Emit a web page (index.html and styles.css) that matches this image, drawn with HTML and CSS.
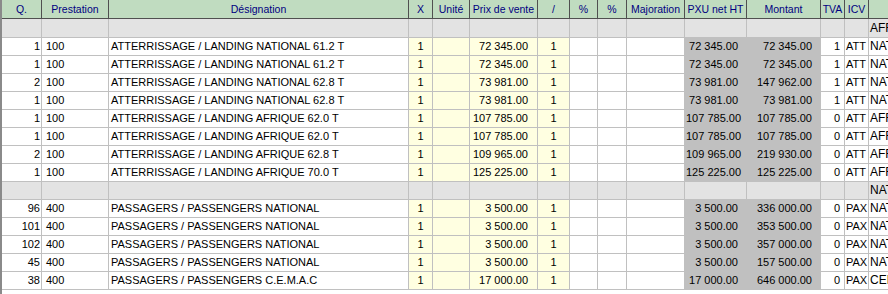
FILE: index.html
```html
<!DOCTYPE html>
<html lang="fr">
<head>
<meta charset="utf-8">
<title>Prestations</title>
<link rel="stylesheet" href="styles.css">
</head>
<body>
<div class="grid">
  <div class="row head">
    <div class="c">Q.</div><div class="c">Prestation</div><div class="c">Désignation</div><div class="c">X</div><div class="c">Unité</div><div class="c">Prix de vente</div><div class="c">/</div><div class="c">%</div><div class="c">%</div><div class="c">Majoration</div><div class="c">PXU net HT</div><div class="c">Montant</div><div class="c">TVA</div><div class="c">ICV</div><div class="c">NA</div>
  </div>
  <div class="row group first">
    <div class="c"></div><div class="c"></div><div class="c"></div><div class="c"></div><div class="c"></div><div class="c"></div><div class="c"></div><div class="c"></div><div class="c"></div><div class="c"></div><div class="c"></div><div class="c"></div><div class="c"></div><div class="c"></div><div class="c na">AFRIQUE</div>
  </div>
  <div class="row data">
    <div class="c q">1</div><div class="c pr">100</div><div class="c de">ATTERRISSAGE / LANDING NATIONAL 61.2 T</div><div class="c x">1</div><div class="c u"></div><div class="c p">72 345.00</div><div class="c sl">1</div><div class="c"></div><div class="c"></div><div class="c"></div><div class="c pxu">72 345.00</div><div class="c mo">72 345.00</div><div class="c tva">1</div><div class="c icv">ATT</div><div class="c na">NATIONAL</div>
  </div>
  <div class="row data">
    <div class="c q">1</div><div class="c pr">100</div><div class="c de">ATTERRISSAGE / LANDING NATIONAL 61.2 T</div><div class="c x">1</div><div class="c u"></div><div class="c p">72 345.00</div><div class="c sl">1</div><div class="c"></div><div class="c"></div><div class="c"></div><div class="c pxu">72 345.00</div><div class="c mo">72 345.00</div><div class="c tva">1</div><div class="c icv">ATT</div><div class="c na">NATIONAL</div>
  </div>
  <div class="row data">
    <div class="c q">2</div><div class="c pr">100</div><div class="c de">ATTERRISSAGE / LANDING NATIONAL 62.8 T</div><div class="c x">1</div><div class="c u"></div><div class="c p">73 981.00</div><div class="c sl">1</div><div class="c"></div><div class="c"></div><div class="c"></div><div class="c pxu">73 981.00</div><div class="c mo">147 962.00</div><div class="c tva">1</div><div class="c icv">ATT</div><div class="c na">NATIONAL</div>
  </div>
  <div class="row data">
    <div class="c q">1</div><div class="c pr">100</div><div class="c de">ATTERRISSAGE / LANDING NATIONAL 62.8 T</div><div class="c x">1</div><div class="c u"></div><div class="c p">73 981.00</div><div class="c sl">1</div><div class="c"></div><div class="c"></div><div class="c"></div><div class="c pxu">73 981.00</div><div class="c mo">73 981.00</div><div class="c tva">1</div><div class="c icv">ATT</div><div class="c na">NATIONAL</div>
  </div>
  <div class="row data">
    <div class="c q">1</div><div class="c pr">100</div><div class="c de">ATTERRISSAGE / LANDING AFRIQUE 62.0 T</div><div class="c x">1</div><div class="c u"></div><div class="c p">107 785.00</div><div class="c sl">1</div><div class="c"></div><div class="c"></div><div class="c"></div><div class="c pxu">107 785.00</div><div class="c mo">107 785.00</div><div class="c tva">0</div><div class="c icv">ATT</div><div class="c na">AFRIQUE</div>
  </div>
  <div class="row data">
    <div class="c q">1</div><div class="c pr">100</div><div class="c de">ATTERRISSAGE / LANDING AFRIQUE 62.0 T</div><div class="c x">1</div><div class="c u"></div><div class="c p">107 785.00</div><div class="c sl">1</div><div class="c"></div><div class="c"></div><div class="c"></div><div class="c pxu">107 785.00</div><div class="c mo">107 785.00</div><div class="c tva">0</div><div class="c icv">ATT</div><div class="c na">AFRIQUE</div>
  </div>
  <div class="row data">
    <div class="c q">2</div><div class="c pr">100</div><div class="c de">ATTERRISSAGE / LANDING AFRIQUE 62.8 T</div><div class="c x">1</div><div class="c u"></div><div class="c p">109 965.00</div><div class="c sl">1</div><div class="c"></div><div class="c"></div><div class="c"></div><div class="c pxu">109 965.00</div><div class="c mo">219 930.00</div><div class="c tva">0</div><div class="c icv">ATT</div><div class="c na">AFRIQUE</div>
  </div>
  <div class="row data">
    <div class="c q">1</div><div class="c pr">100</div><div class="c de">ATTERRISSAGE / LANDING AFRIQUE 70.0 T</div><div class="c x">1</div><div class="c u"></div><div class="c p">125 225.00</div><div class="c sl">1</div><div class="c"></div><div class="c"></div><div class="c"></div><div class="c pxu">125 225.00</div><div class="c mo">125 225.00</div><div class="c tva">0</div><div class="c icv">ATT</div><div class="c na">AFRIQUE</div>
  </div>
  <div class="row group">
    <div class="c"></div><div class="c"></div><div class="c"></div><div class="c"></div><div class="c"></div><div class="c"></div><div class="c"></div><div class="c"></div><div class="c"></div><div class="c"></div><div class="c"></div><div class="c"></div><div class="c"></div><div class="c"></div><div class="c na">NATIONAL</div>
  </div>
  <div class="row data">
    <div class="c q">96</div><div class="c pr">400</div><div class="c de">PASSAGERS / PASSENGERS NATIONAL</div><div class="c x">1</div><div class="c u"></div><div class="c p">3 500.00</div><div class="c sl">1</div><div class="c"></div><div class="c"></div><div class="c"></div><div class="c pxu">3 500.00</div><div class="c mo">336 000.00</div><div class="c tva">0</div><div class="c icv">PAX</div><div class="c na">NATIONAL</div>
  </div>
  <div class="row data">
    <div class="c q">101</div><div class="c pr">400</div><div class="c de">PASSAGERS / PASSENGERS NATIONAL</div><div class="c x">1</div><div class="c u"></div><div class="c p">3 500.00</div><div class="c sl">1</div><div class="c"></div><div class="c"></div><div class="c"></div><div class="c pxu">3 500.00</div><div class="c mo">353 500.00</div><div class="c tva">0</div><div class="c icv">PAX</div><div class="c na">NATIONAL</div>
  </div>
  <div class="row data">
    <div class="c q">102</div><div class="c pr">400</div><div class="c de">PASSAGERS / PASSENGERS NATIONAL</div><div class="c x">1</div><div class="c u"></div><div class="c p">3 500.00</div><div class="c sl">1</div><div class="c"></div><div class="c"></div><div class="c"></div><div class="c pxu">3 500.00</div><div class="c mo">357 000.00</div><div class="c tva">0</div><div class="c icv">PAX</div><div class="c na">NATIONAL</div>
  </div>
  <div class="row data">
    <div class="c q">45</div><div class="c pr">400</div><div class="c de">PASSAGERS / PASSENGERS NATIONAL</div><div class="c x">1</div><div class="c u"></div><div class="c p">3 500.00</div><div class="c sl">1</div><div class="c"></div><div class="c"></div><div class="c"></div><div class="c pxu">3 500.00</div><div class="c mo">157 500.00</div><div class="c tva">0</div><div class="c icv">PAX</div><div class="c na">NATIONAL</div>
  </div>
  <div class="row data">
    <div class="c q">38</div><div class="c pr">400</div><div class="c de">PASSAGERS / PASSENGERS C.E.M.A.C</div><div class="c x">1</div><div class="c u"></div><div class="c p">17 000.00</div><div class="c sl">1</div><div class="c"></div><div class="c"></div><div class="c"></div><div class="c pxu">17 000.00</div><div class="c mo">646 000.00</div><div class="c tva">0</div><div class="c icv">PAX</div><div class="c na">CEMAC</div>
  </div>
</div>
</body>
</html>
```
FILE: styles.css
```css
html, body {
  margin: 0;
  padding: 0;
  background: #ffffff;
}
body {
  width: 888px;
  height: 294px;
  overflow: hidden;
}
.grid {
  width: 888px;
  height: 294px;
  box-sizing: border-box;
  border-left: 2px solid #8a8a8a;
  overflow: hidden;
  background: #ffffff;
  font-family: "Liberation Sans", Arial, sans-serif;
  font-size: 11px;
  color: #000000;
}
.row {
  display: grid;
  grid-template-columns: 40px 67px 300px 24px 37px 68px 32px 28px 29px 58px 62px 74px 24px 24px 60px;
  width: 928px;
  height: 18px;
}
.c {
  box-sizing: border-box;
  border-right: 1px solid #c0c0c0;
  border-bottom: 1px solid #c0c0c0;
  white-space: nowrap;
  overflow: hidden;
  line-height: 17px;
  padding: 0 1px;
}
.head {
  height: 19px;
  background: #c0dcc0;
}
.head .c {
  border-right-color: #505050;
  border-bottom-color: #505050;
  color: #000080;
  font-size: 10.5px;
  line-height: 18px;
  text-align: center;
  padding: 0;
}
.group {
  background: #e3e3e3;
}
.group.first {
  height: 19px;
}
.group.first .c {
  line-height: 18px;
}
.q { text-align: right; padding-right: 1px; }
.pr { padding-left: 4px; }
.de { padding-left: 2px; }
.x, .sl { text-align: center; background: #ffffe1; }
.u { background: #ffffe1; }
.p { text-align: right; padding-right: 9px; background: #ffffe1; }
.pxu, .mo { text-align: right; padding-right: 8px; background: #c0c0c0; }
.tva { text-align: right; padding-right: 4px; }
.icv { padding-left: 1px; }
.na { padding-left: 1px; font-size: 12px; }
.head .c.na { font-size: 12px; text-align: left; padding-left: 1px; }
```
